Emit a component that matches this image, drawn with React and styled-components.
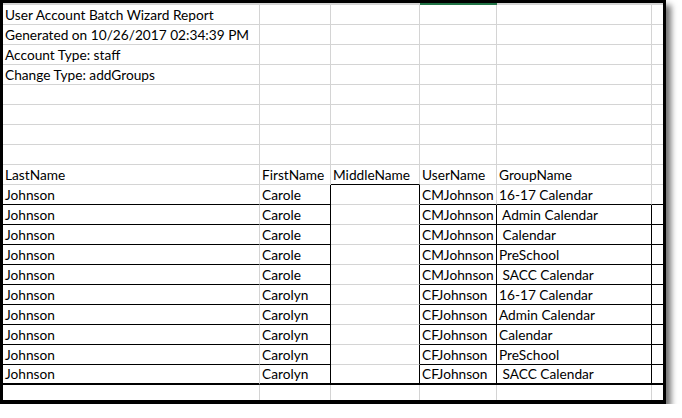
import styled, { createGlobalStyle } from "styled-components";

const GRID = "#d4d4d4";
const INK = "#000";
const COLS = "257px 71px 89px 77px 155px 11px";

const GlobalStyle = createGlobalStyle`
  body {
    margin: 0;
    background: #fff;
    font-family: Lato, "Noto Sans", "Liberation Sans", sans-serif;
  }
`;

const Frame = styled.div`
  width: 660px;
  border: 3px solid #000;
  border-bottom-width: 4px;
  background: #fff;
  box-shadow: 5px 5px 6px rgba(0, 0, 0, 0.55);
`;

const Strip = styled.div`
  display: grid;
  grid-template-columns: ${COLS};
  height: 2px;
`;

const StripCell = styled.div`
  background: ${(p) => (p.$active ? "#217346" : GRID)};
`;

const Sheet = styled.div`
  display: grid;
  grid-template-columns: ${COLS};
  grid-template-rows: repeat(19, 20px) 15px;
`;

const Cell = styled.div`
  box-sizing: border-box;
  display: flex;
  align-items: flex-end;
  padding-left: 2px;
  border-right: ${(p) => (p.$right ? `1px solid ${p.$right}` : "none")};
  border-bottom: ${(p) =>
    p.$bottom ? `${p.$bw || 1}px solid ${p.$bottom}` : "none"};
  font-size: 13.7px;
  line-height: 18px;
  color: #000;
  white-space: pre;
  overflow: visible;
`;

const groupsCM = ["16-17 Calendar", " Admin Calendar", " Calendar", "PreSchool", " SACC Calendar"];
const groupsCF = ["16-17 Calendar", "Admin Calendar", "Calendar", "PreSchool", " SACC Calendar"];

const rows = [
  ["User Account Batch Wizard Report"],
  ["Generated on 10/26/2017 02:34:39 PM"],
  ["Account Type: staff"],
  ["Change Type: addGroups"],
  [],
  [],
  [],
  [],
  ["LastName", "FirstName", "MiddleName", "UserName", "GroupName"],
  ...groupsCM.map((g) => ["Johnson", "Carole", "", "CMJohnson", g]),
  ...groupsCF.map((g) => ["Johnson", "Carolyn", "", "CFJohnson", g]),
  [],
];

// row numbers are 1-based like the spreadsheet, columns 0..5 (A..F)
const rightColor = (r, c) => {
  if (c === 5) return null;
  const data = r >= 10 && r <= 19;
  if (data && (c === 1 || c === 2)) return INK;
  if (r >= 11 && r <= 19 && (c === 3 || c === 4)) return INK;
  return GRID;
};

const bottomColor = (r, c) => {
  if (r === 20) return null;
  if (r === 9 && c === 2) return INK;
  if (r >= 10 && r <= 19) {
    if (c === 2) return r === 19 ? INK : GRID;
    return INK;
  }
  return GRID;
};

export default function App() {
  return (
    <>
      <GlobalStyle />
      <Frame>
        <Strip>
          {[0, 1, 2, 3, 4, 5].map((c) => (
            <StripCell key={c} $active={c === 3} />
          ))}
        </Strip>
        <Sheet>
          {rows.map((row, i) =>
            [0, 1, 2, 3, 4, 5].map((c) => {
              const r = i + 1;
              return (
                <Cell
                  key={`${r}-${c}`}
                  $right={rightColor(r, c)}
                  $bottom={bottomColor(r, c)}
                  $bw={r === 19 ? 2 : 1}
                >
                  {row[c] || ""}
                </Cell>
              );
            })
          )}
        </Sheet>
      </Frame>
    </>
  );
}
